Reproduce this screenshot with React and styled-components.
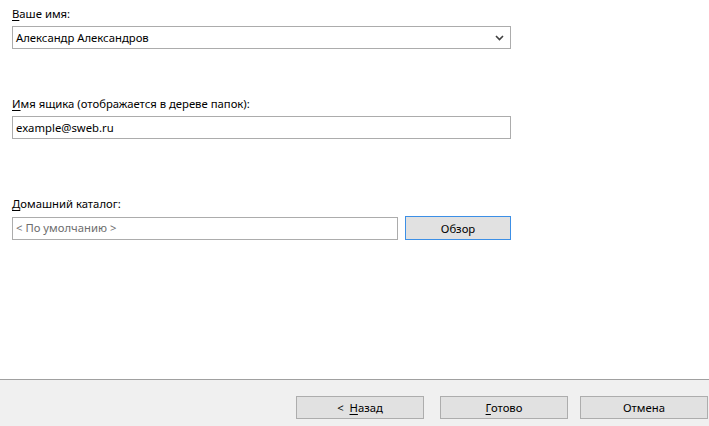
import { createGlobalStyle, styled } from 'styled-components'

const GlobalStyle = createGlobalStyle`
  html, body {
    margin: 0;
    padding: 0;
    background: #fff;
  }
  body {
    font-family: 'Noto Sans', 'DejaVu Sans', sans-serif;
    font-size: 11.3px;
    color: #000;
  }
`

const Window = styled.div`
  width: 709px;
  height: 426px;
  display: flex;
  flex-direction: column;
  background: #fff;
`

const Content = styled.div`
  flex: 1;
  padding: 6px 198px 0 12px;
  display: flex;
  flex-direction: column;
`

const Field = styled.div`
  display: flex;
  flex-direction: column;
  margin-top: ${({ $offset }) => $offset || 0}px;
`

const Label = styled.label`
  line-height: 16px;
  height: 16px;
  margin-bottom: 4px;
`

const Key = styled.span`
  text-decoration: underline;
  text-underline-offset: 2px;
`

const Box = styled.div`
  box-sizing: border-box;
  height: 23px;
  border: 1px solid #acacac;
  background: #fff;
  display: flex;
  align-items: center;
  padding: 0 3px 0 3px;
  color: ${({ $muted }) => ($muted ? '#6d6d6d' : '#000')};
  flex: ${({ $grow }) => ($grow ? 1 : 'none')};
`

const BoxText = styled.span`
  flex: 1;
  line-height: 16px;
`

const Row = styled.div`
  display: flex;
  gap: 7px;
  align-items: center;
`

const Button = styled.button`
  box-sizing: border-box;
  width: ${({ $w }) => $w || 128}px;
  height: ${({ $h }) => $h || 23}px;
  margin-left: ${({ $gap }) => $gap || 0}px;
  background: #e1e1e1;
  border: 1px solid ${({ $focused }) => ($focused ? '#3c8fe6' : '#adadad')};
  font: inherit;
  color: #000;
  padding: 0;
  cursor: default;
`

const Footer = styled.div`
  box-sizing: border-box;
  height: 47px;
  border-top: 1px solid #a0a0a0;
  background: #f0f0f0;
  display: flex;
  justify-content: flex-end;
  align-items: flex-start;
  padding: 16px 1px 0 0;
`

const Chevron = () => (
  <svg width="9" height="6" viewBox="0 0 9 6" style={{ marginRight: 3 }}>
    <path d="M1 1 L4.5 4.5 L8 1" fill="none" stroke="#404040" strokeWidth="1.6" />
  </svg>
)

const App = () => (
  <>
    <GlobalStyle />
    <Window>
      <Content>
        <Field>
          <Label>
            <Key>В</Key>аше имя:
          </Label>
          <Box>
            <BoxText>Александр Александров</BoxText>
            <Chevron />
          </Box>
        </Field>
        <Field $offset={47}>
          <Label>
            <Key>И</Key>мя ящика (отображается в дереве папок):
          </Label>
          <Box>
            <BoxText>example@sweb.ru</BoxText>
          </Box>
        </Field>
        <Field $offset={57}>
          <Label>
            <Key>Д</Key>омашний каталог:
          </Label>
          <Row>
            <Box $grow $muted>
              <BoxText>&lt; По умолчанию &gt;</BoxText>
            </Box>
            <Button $w={106} $h={24} $focused>
              Обзор
            </Button>
          </Row>
        </Field>
      </Content>
      <Footer>
        <Button>
          &lt;&nbsp; <Key>Н</Key>азад
        </Button>
        <Button $gap={16}>
          <Key>Г</Key>отово
        </Button>
        <Button $gap={12}>Отмена</Button>
      </Footer>
    </Window>
  </>
)

export default App
